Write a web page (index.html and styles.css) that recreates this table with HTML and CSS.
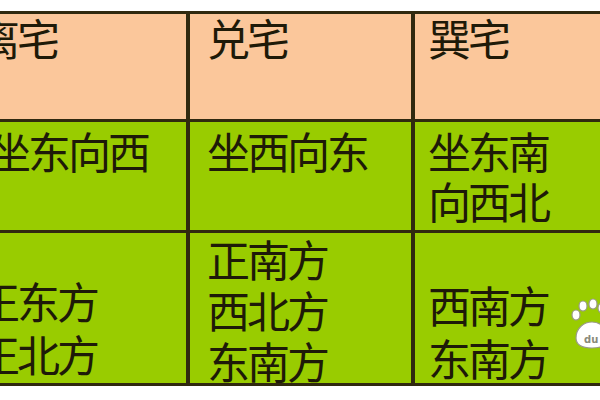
FILE: index.html
```html
<!DOCTYPE html>
<html lang="zh">
<head>
<meta charset="utf-8">
<title>八宅方位</title>
<link rel="stylesheet" href="styles.css">
</head>
<body>
<div class="sheet">
  <div class="cell head c1">离宅</div>
  <div class="cell head c2">兑宅</div>
  <div class="cell head c3">巽宅</div>

  <div class="cell body r1 c1 shift">坐东向西</div>
  <div class="cell body r1 c2">坐西向东</div>
  <div class="cell body r1 c3">坐东南<br>向西北</div>

  <div class="cell body r2 c1 low">正东方<br>正北方</div>
  <div class="cell body r2 c2">正南方<br>西北方<br>东南方</div>
  <div class="cell body r2 c3 lower">西南方<br>东南方</div>
</div>
<svg class="paw" width="32" height="52" viewBox="0 0 32 52" aria-hidden="true">
  <g fill="#ffffff" stroke="#9a9a8a" stroke-width="1.2">
    <ellipse cx="6" cy="17" rx="4" ry="5"/>
    <ellipse cx="13" cy="8" rx="4" ry="5"/>
    <ellipse cx="23" cy="6" rx="4" ry="5"/>
    <ellipse cx="32" cy="10" rx="4" ry="5"/>
    <path d="M6 40 C6 30 14 24 22 24 C30 24 38 30 38 40 C38 48 30 50 22 50 C14 50 6 48 6 40 Z"/>
  </g>
  <text x="14" y="45" class="pawtext">du</text>
</svg>
</body>
</html>
```
FILE: styles.css
```css
html, body {
  margin: 0;
  padding: 0;
  background: #ffffff;
  overflow: hidden;
}

body {
  width: 600px;
  height: 400px;
  position: relative;
  font-family: "Noto Sans CJK SC", "Noto Sans", sans-serif;
  color: #1e1a08;
}

.sheet {
  display: grid;
  grid-template-columns: 227px 221px 225px;
  grid-template-rows: 105px 108px 150px;
  gap: 3px 4px;
  width: max-content;
  margin: 11px 0 0 -44px;
  border: 3px solid #30290f;
  background: #30290f;
}

.cell {
  font-size: 43px;
  letter-spacing: -3px;
  line-height: 51px;
  white-space: nowrap;
  overflow: visible;
}

.head {
  background: #fbc79b;
  line-height: 40px;
  padding-top: 3px;
}

.body {
  background: #99cc00;
}

.r1 {
  padding-top: 3px;
  line-height: 50px;
}

.r2 {
  padding-top: 0;
}

.c1 { padding-left: 18px; }
.c2 { padding-left: 17px; }
.c3 { padding-left: 13px; }

.c1.shift { padding-left: 29px; }

.low {
  padding-top: 41px;
  line-height: 53px;
}

.lower {
  padding-top: 45px;
  line-height: 53px;
}

.paw {
  position: absolute;
  left: 570px;
  top: 298px;
}

.pawtext {
  font-family: "DejaVu Sans", sans-serif;
  font-size: 10px;
  font-weight: bold;
  fill: #8a8a7a;
  letter-spacing: 0;
}
```
